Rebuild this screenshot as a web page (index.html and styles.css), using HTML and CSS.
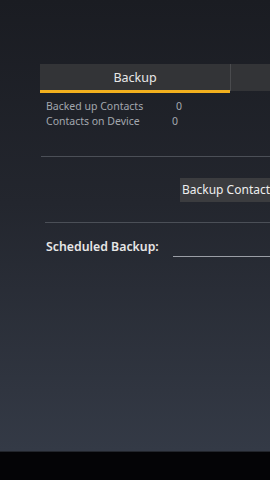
FILE: index.html
```html
<!DOCTYPE html>
<html lang="en">
<head>
  <meta charset="UTF-8" />
  <meta name="viewport" content="width=device-width, initial-scale=1.0" />
  <title>Contacts Backup</title>
  <link rel="stylesheet" href="styles.css">
</head>
<body>
  <div class="screen">
    <div class="content">
      <div class="tabs">
        <div class="tab active">Backup</div>
        <div class="tab"></div>
      </div>

      <div class="stats">
        <div class="stat-row">
          <span class="stat-label">Backed up Contacts</span>
          <span class="stat-value first">0</span>
        </div>
        <div class="stat-row">
          <span class="stat-label">Contacts on Device</span>
          <span class="stat-value">0</span>
        </div>
      </div>

      <hr class="divider">

      <div class="actions">
        <button class="action-btn">Backup Contacts</button>
      </div>

      <hr class="divider inset">

      <div class="schedule">
        <label for="schedule">Scheduled Backup:</label>
        <input type="text" id="schedule" class="schedule-input">
      </div>
    </div>
  </div>
  <div class="navbar"></div>
</body>
</html>
```

FILE: styles.css
```css
* {
  box-sizing: border-box;
}

html, body {
  margin: 0;
  height: 100%;
}

body {
  width: 270px;
  height: 480px;
  overflow: hidden;
  font-family: 'Noto Sans', 'Open Sans', sans-serif;
  background-color: #000;
  display: flex;
  flex-direction: column;
}

.screen {
  height: 451px;
  background: linear-gradient(to bottom, #1a1c22 0%, #23262e 45%, #343a46 100%);
  overflow: hidden;
}

.content {
  width: 420px;
  padding: 64px 0 0 40px;
}

.tabs {
  display: flex;
  height: 29px;
}

.tab {
  background-color: #333437;
  color: #e8e8e8;
  font-size: 12.5px;
  display: flex;
  align-items: center;
  justify-content: center;
  padding-top: 1px;
}

.tab.active {
  width: 190px;
  border-bottom: 3px solid #f2b01e;
}

.tab:not(.active) {
  flex: 1;
  height: 27px;
  border-left: 1px solid #4a4b4e;
}

.stats {
  padding: 6px 0 0 6px;
  font-size: 10.5px;
  color: #a3a7ae;
}

.stat-row {
  display: flex;
  line-height: 15px;
}

.stat-label {
  width: 126px;
}

.stat-value.first {
  padding-left: 4px;
}

.divider {
  margin: 27px 0 0 1px;
  border: none;
  height: 1px;
  background-color: #4b4f57;
}

.divider.inset {
  margin: 20px 0 0 5px;
}

.actions {
  padding: 20px 0 0 140px;
}

.action-btn {
  height: 24px;
  padding: 0 2px;
  border: none;
  background-color: #3b3c3f;
  color: #eeeeee;
  font-family: inherit;
  font-size: 12px;
  white-space: nowrap;
  cursor: pointer;
}

.schedule {
  display: flex;
  align-items: flex-end;
  padding: 16px 0 0 6px;
}

.schedule label {
  width: 127px;
  font-size: 12.3px;
  font-weight: 600;
  color: #e6e6e6;
  line-height: 16px;
  padding-bottom: 2px;
}

.schedule-input {
  width: 200px;
  height: 18px;
  background: transparent;
  border: none;
  border-bottom: 1px solid #9a9ea6;
}

.navbar {
  flex: 1;
  background-color: #040406;
  border-top: 1px solid #22252b;
}
```
